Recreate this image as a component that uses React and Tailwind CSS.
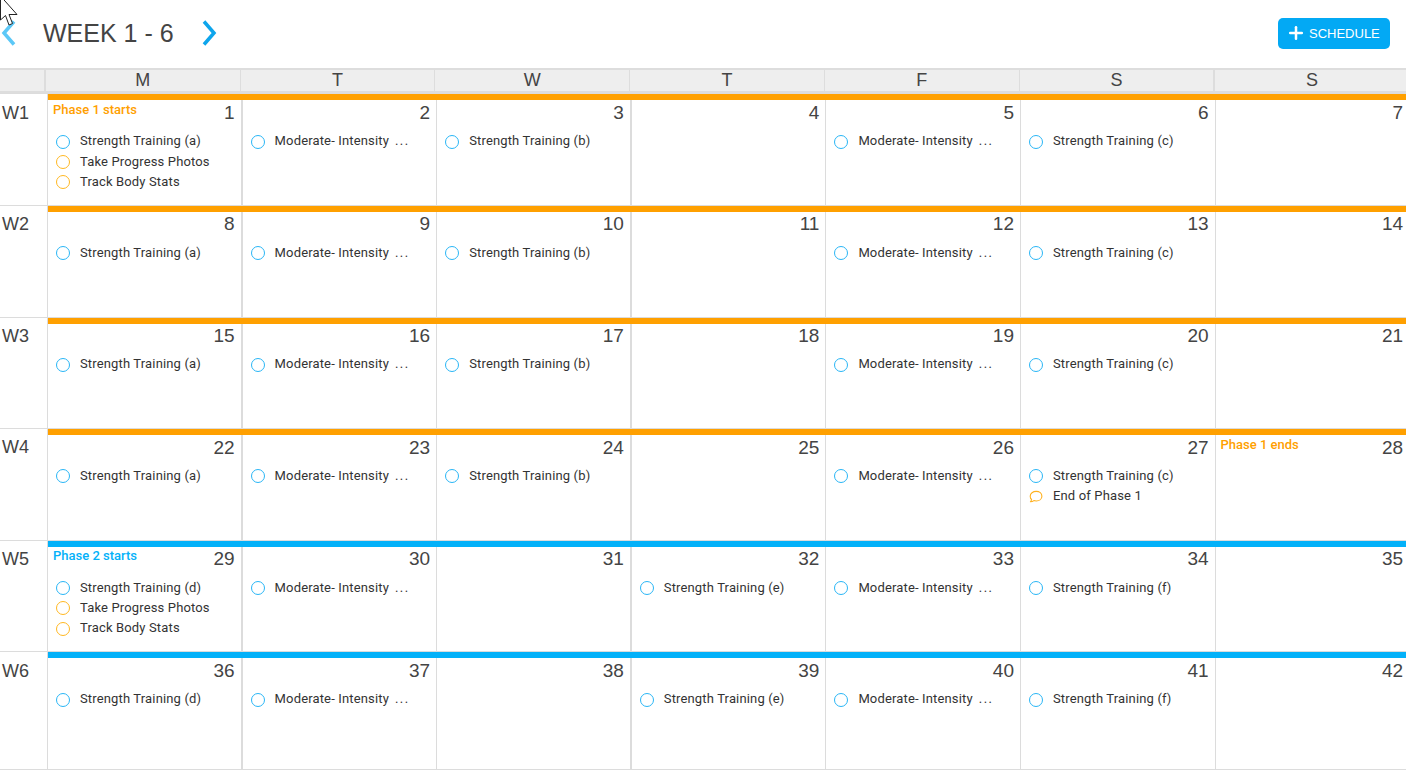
import { Plus } from "lucide-react";

const days = ["M", "T", "W", "T", "F", "S", "S"];

const A = "Moderate- Intensity ...";
const circle = "blue";
const gold = "orange";

const weeks = [
    {
        label: "W1", bar: "bg-[#ffa000]", start: 1,
        items: [[["Strength Training (a)", circle], ["Take Progress Photos", gold], ["Track Body Stats", gold]], [[A, circle]], [["Strength Training (b)", circle]], [], [[A, circle]], [["Strength Training (c)", circle]], []],
        notes: { 0: ["Phase 1 starts", "text-[#ffa000]"] },
    },
    {
        label: "W2", bar: "bg-[#ffa000]", start: 8,
        items: [[["Strength Training (a)", circle]], [[A, circle]], [["Strength Training (b)", circle]], [], [[A, circle]], [["Strength Training (c)", circle]], []],
    },
    {
        label: "W3", bar: "bg-[#ffa000]", start: 15,
        items: [[["Strength Training (a)", circle]], [[A, circle]], [["Strength Training (b)", circle]], [], [[A, circle]], [["Strength Training (c)", circle]], []],
    },
    {
        label: "W4", bar: "bg-[#ffa000]", start: 22,
        items: [[["Strength Training (a)", circle]], [[A, circle]], [["Strength Training (b)", circle]], [], [[A, circle]], [["Strength Training (c)", circle], ["End of Phase 1", "comment"]], []],
        notes: { 6: ["Phase 1 ends", "text-[#ffa000]"] },
    },
    {
        label: "W5", bar: "bg-[#03b1f9]", start: 29,
        items: [[["Strength Training (d)", circle], ["Take Progress Photos", gold], ["Track Body Stats", gold]], [[A, circle]], [], [["Strength Training (e)", circle]], [[A, circle]], [["Strength Training (f)", circle]], []],
        notes: { 0: ["Phase 2 starts", "text-[#03b1f9]"] },
    },
    {
        label: "W6", bar: "bg-[#03b1f9]", start: 36, last: true,
        items: [[["Strength Training (d)", circle]], [[A, circle]], [], [["Strength Training (e)", circle]], [[A, circle]], [["Strength Training (f)", circle]], []],
    },
];

const ItemIcon = ({ kind }) => {
    if (kind === "comment") {
        return (
            <svg width="14" height="14" viewBox="0 0 14 14" fill="none" className="shrink-0">
                <path d="M7.2 1.400c3.200 0 5.700 2 5.700 4.800s-2.500 4.800-5.700 4.800c-.8 0-1.600-.1-2.300-.4-.9.7-1.900 1.100-3.500 1.200.7-.7 1.100-1.500 1.200-2.500C1.700 9 1.200 7.700 1.200 6.200c0-2.800 2.800-4.800 6-4.800z" stroke="#ffb11f" strokeWidth="1.100" strokeLinejoin="round" />
            </svg>
        );
    }
    return <span className={"block w-[14px] h-[14px] shrink-0 rounded-full border " + (kind === "blue" ? "border-[#29b6f6]" : "border-[#ffb822]")}></span>;
};

const ItemText = ({ text }) => {
    // the cut off names keep their dots spaced apart
    if (text.endsWith(" ...")) {
        return (
            <>
                {text.slice(0, -4)}
                <span className="ml-[6px] tracking-[1.5px]">...</span>
            </>
        );
    }
    return text;
};

const Cell = ({ week, index }) => {
    const note = week.notes && week.notes[index];
    const wide = index === 0 || index === 2;
    return (
        <div className={"min-w-0 border-r border-[#dcdcdc] " + (wide ? "border-r-2" : "")}>
            <div className="flex justify-between items-start h-[31px] pl-[5px] pr-[6px]">
                <span className={"mt-[2.6px] text-[13px] leading-[14px] font-medium font-['Roboto',sans-serif] " + (note ? note[1] : "")}>{note ? note[0] : ""}</span>
                <span className="mt-[1.4px] text-[19px] leading-[22px] text-[#444]">{week.start + index}</span>
            </div>
            <div className="flex flex-col pl-[8px]">
                {week.items[index].map(([text, kind], i) => (
                    <div key={i} className="flex items-center h-[20.3px]">
                        <ItemIcon kind={kind} />
                        <span className="ml-[10px] pb-[1px] text-[13px] tracking-[0.15px] whitespace-nowrap text-[#333] font-['Roboto',sans-serif]"><ItemText text={text} /></span>
                    </div>
                ))}
            </div>
        </div>
    );
};

const App = () => {
    return (
        <div className="relative w-[1406px] h-[772px] overflow-hidden bg-white font-['Liberation_Sans',Arial,sans-serif]">
            {/* cursor from the screen capture */}
            <svg width="20" height="28" viewBox="0 0 20 28" className="absolute top-0 left-0">
                <path d="M0.5 -4V20L5.5 15.500L9 25L12.500 23.500L9 14.500L17 14.500Z" fill="#fff" stroke="#222" strokeWidth="1" />
            </svg>

            <div className="flex items-center justify-between h-[68px] pb-[2px] pr-[16px]">
                <div className="flex items-center">
                    <svg width="18" height="26" viewBox="0 0 18 26" fill="none">
                        <path d="M14 1.500L4 13L14 24.500" stroke="#5cc8f7" strokeWidth="3.500" />
                    </svg>
                    <h1 className="ml-[25px] mb-[1px] text-[25px] leading-[30px] font-normal text-[#444]">WEEK 1 - 6</h1>
                    <svg width="18" height="26" viewBox="0 0 18 26" fill="none" className="ml-[26px]">
                        <path d="M4 1.500L14 13L4 24.500" stroke="#0ea5ec" strokeWidth="3.500" />
                    </svg>
                </div>
                <button className="flex items-center h-[31px] w-[112px] pl-[7.5px] rounded-[5px] bg-[#03a9f4] text-white text-[13px]">
                    <Plus size={20} strokeWidth={3} />
                    <span className="ml-[3.5px] mt-[1px]">SCHEDULE</span>
                </button>
            </div>

            <div className="grid grid-cols-[44px_195.5px_repeat(6,194.8px)] h-[25.4px] bg-[#eeeeee] border-t-2 border-b-2 border-[#dddddd]">
                <div></div>
                {days.map((d, i) => (
                    <div key={i} className={"flex items-center justify-center pb-[3px] border-[#dddddd] text-[18px] leading-[20px] text-[#444] " + (i === 0 || i === 6 ? "border-l-2" : "border-l")}>{d}</div>
                ))}
            </div>

            {weeks.map((week) => (
                <div key={week.label} className={"grid grid-cols-[48px_1fr] " + (week.last ? "h-[118.6px] border-t border-b border-[#dcdcdc]" : "h-[111.6px] border-t border-[#dcdcdc]")}>
                    <div className="pl-[2px] pt-[7.2px] border-r border-[#dcdcdc] text-[18px] leading-[22px] text-[#444]">{week.label}</div>
                    <div className="flex flex-col min-w-0">
                        <div className={"h-[6px] shrink-0 " + week.bar}></div>
                        <div className="flex-1 grid grid-cols-[repeat(7,194.6px)]">
                            {week.items.map((_, i) => (
                                <Cell key={i} week={week} index={i} />
                            ))}
                        </div>
                    </div>
                </div>
            ))}
        </div>
    );
};

export default App;
